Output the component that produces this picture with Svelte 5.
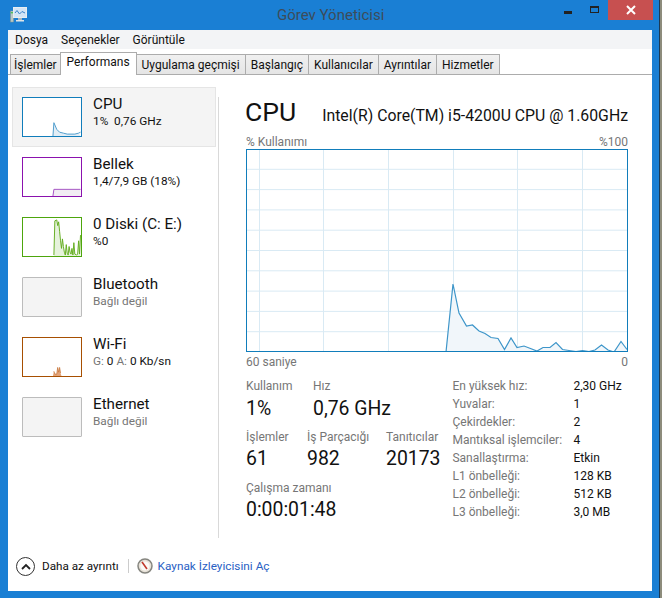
<script lang="ts">
  const tabs = ['İşlemler', 'Performans', 'Uygulama geçmişi', 'Başlangıç', 'Kullanıcılar', 'Ayrıntılar', 'Hizmetler'];

  const specs = [
    ['En yüksek hız:', '2,30 GHz'],
    ['Yuvalar:', '1'],
    ['Çekirdekler:', '2'],
    ['Mantıksal işlemciler:', '4'],
    ['Sanallaştırma:', 'Etkin'],
    ['L1 önbelleği:', '128 KB'],
    ['L2 önbelleği:', '512 KB'],
    ['L3 önbelleği:', '3,0 MB'],
  ];

  // big graph, traced from the reference, in chart coordinates (382 x 203)
  const cpu = [
    [200, 203], [207, 135], [213, 164], [220.5, 177], [226.5, 176], [233, 182], [239, 184.5],
    [245, 188.5], [252, 189.5], [258.5, 200.5], [265, 189], [271, 198.5], [278, 197], [284.5, 199.5],
    [291, 202], [297, 198.5], [304, 198.5], [310, 193.5], [316.5, 200.5], [323, 201.5], [330, 202.5],
    [336.5, 201.5], [343, 202.5], [349, 201], [355.5, 196], [362, 201], [368, 203], [375, 192.5], [381, 200.5],
  ];
  const cpuLine = cpu.map((p) => p.join(',')).join(' ');
  const cpuArea = `200,203 ${cpuLine} 382,203`;
  const hLines = [1, 2, 3, 4, 5, 6, 7, 8, 9].map((i) => i * 20.3);
  const vLines = [13, 77, 142, 207, 271, 336];

  const diskLine = '32,39 33,3 35,2 36,8 37,4 38,14 39,24 40,32 41,22 42,30 43,36 44,39 45,28 46,37 47,39 48,30 49,36 50,38 51,32 52,39 53,26 54,38 56,39 57,38 58,24 59,38 60,18';
</script>

<div class="window">
  <header class="titlebar">
    <svg class="app-icon" width="17" height="16" viewBox="0 0 17 16">
      <rect x="0.5" y="4" width="3" height="11" fill="#b9c7c4" stroke="#7f9490" stroke-width="0.5" />
      <rect x="0.8" y="5" width="2.4" height="1.4" fill="#4fc05a" />
      <rect x="3.5" y="0.5" width="13" height="10" fill="#d3e5f6" stroke="#e6eef2" />
      <path d="M5 6 L7 3.5 L9.5 7 L12 4.5 L15 6" fill="none" stroke="#3a83c9" stroke-width="1" />
      <rect x="8" y="11" width="4" height="2" fill="#a9b6bf" />
      <rect x="6" y="13" width="8" height="1.5" fill="#dfe5e8" />
    </svg>
    <span class="title">Görev Yöneticisi</span>
    <div class="controls">
      <span class="min"></span>
      <span class="max"></span>
      <span class="close">
        <svg width="10" height="10" viewBox="0 0 10 10">
          <path d="M1 1 L9 9 M9 1 L1 9" stroke="#fff" stroke-width="2" />
        </svg>
      </span>
    </div>
  </header>

  <div class="client">
    <nav class="menu">
      <span>Dosya</span>
      <span>Seçenekler</span>
      <span>Görüntüle</span>
    </nav>

    <div class="tabs">
      {#each tabs as tab}
        <span class="tab" class:active={tab === 'Performans'}>{tab}</span>
      {/each}
    </div>

    <main class="body">
      <aside class="sidebar">
        <div class="item selected">
          <svg class="thumb" viewBox="0 0 60 40" style="border-color: #117dbb">
            <polygon points="31,40 32,26 35,33 38,36 42,37 46,38 50,38 54,38 58,37 60,40" fill="#e2edf5" />
            <polyline points="31,40 32,26 35,33 38,36 42,37 46,38 50,38 54,38 58,37 60,36" fill="none" stroke="#4a9acb" />
          </svg>
          <div class="item-text">
            <div class="name">CPU</div>
            <div class="sub">1%&nbsp; 0,76 GHz</div>
          </div>
        </div>
        <div class="item">
          <svg class="thumb" viewBox="0 0 60 40" style="border-color: #8b12ae">
            <polygon points="31,40 32,33 60,33 60,40" fill="#f1edf3" />
            <polyline points="31,40 32,33 60,33" fill="none" stroke="#a24fc2" />
          </svg>
          <div class="item-text">
            <div class="name">Bellek</div>
            <div class="sub">1,4/7,9 GB (18%)</div>
          </div>
        </div>
        <div class="item">
          <svg class="thumb" viewBox="0 0 60 40" style="border-color: #4da60c">
            <polygon points="{diskLine} 60,40 32,40" fill="#e6f2dc" />
            <polyline points={diskLine} fill="none" stroke="#62ac1e" stroke-width="1" />
          </svg>
          <div class="item-text">
            <div class="name">0 Diski (C: E:)</div>
            <div class="sub">%0</div>
          </div>
        </div>
        <div class="item">
          <div class="thumb empty"></div>
          <div class="item-text">
            <div class="name">Bluetooth</div>
            <div class="sub muted">Bağlı değil</div>
          </div>
        </div>
        <div class="item">
          <svg class="thumb" viewBox="0 0 60 40" style="border-color: #a74f01">
            <polygon points="31,40 32,35 33,38 35,38 36,31 37,36 38,31 39,37 40,40" fill="#e2a47a" />
            <polyline points="32,35 33,38 35,38 36,31 37,36 38,31 39,37" fill="none" stroke="#c8763a" stroke-width="0.8" />
          </svg>
          <div class="item-text">
            <div class="name">Wi-Fi</div>
            <div class="sub"><span class="muted">G:</span> 0 <span class="muted">A:</span> 0 Kb/sn</div>
          </div>
        </div>
        <div class="item">
          <div class="thumb empty"></div>
          <div class="item-text">
            <div class="name">Ethernet</div>
            <div class="sub muted">Bağlı değil</div>
          </div>
        </div>
      </aside>

      <section class="detail">
        <div class="heading">
          <h1>CPU</h1>
          <span class="model">Intel(R) Core(TM) i5-4200U CPU @ 1.60GHz</span>
        </div>
        <div class="axis top"><span>% Kullanımı</span><span>%100</span></div>
        <svg class="chart" viewBox="0 0 382 203">
          {#each hLines as y}
            <line x1="0" x2="382" y1={y} y2={y} stroke="#d9eaf4" />
          {/each}
          {#each vLines as x}
            <line x1={x + 0.5} x2={x + 0.5} y1="0" y2="203" stroke="#d9eaf4" />
          {/each}
          <polygon points={cpuArea} fill="#f1f6fa" />
          <polyline points={cpuLine} fill="none" stroke="#3d95c9" stroke-width="1.2" />
        </svg>
        <div class="axis bottom"><span>60 saniye</span><span>0</span></div>

        <div class="stats">
          <div class="live">
            <div class="row first">
              <div class="stat usage"><label>Kullanım</label><strong>1%</strong></div>
              <div class="stat"><label>Hız</label><strong>0,76 GHz</strong></div>
            </div>
            <div class="row">
              <div class="stat procs"><label>İşlemler</label><strong>61</strong></div>
              <div class="stat threads"><label>İş Parçacığı</label><strong>982</strong></div>
              <div class="stat"><label>Tanıtıcılar</label><strong>20173</strong></div>
            </div>
            <div class="stat"><label>Çalışma zamanı</label><strong>0:00:01:48</strong></div>
          </div>
          <dl class="specs">
            {#each specs as [k, v]}
              <dt>{k}</dt>
              <dd>{v}</dd>
            {/each}
          </dl>
        </div>
      </section>
    </main>

    <footer class="footer">
      <span class="less-icon">
        <svg width="10" height="7" viewBox="0 0 10 7">
          <path d="M1 6 L5 2 L9 6" fill="none" stroke="#222" stroke-width="1.8" />
        </svg>
      </span>
      <span class="less">Daha az ayrıntı</span>
      <span class="sep"></span>
      <svg class="gauge" width="16" height="16" viewBox="0 0 16 16">
        <circle cx="8" cy="8" r="7" fill="#e8e2d8" stroke="#85857f" stroke-width="1.5" />
        <circle cx="8" cy="8" r="4.6" fill="#fbfaf6" />
        <path d="M5 4 L10 11" stroke="#c0392b" stroke-width="1.6" />
      </svg>
      <span class="link">Kaynak İzleyicisini Aç</span>
    </footer>
  </div>
</div>

<style>
  :global(body) {
    margin: 0;
    background: #8d8c7c;
  }

  .window {
    width: 660px;
    height: 598px;
    box-sizing: border-box;
    padding: 0 7px 7px 8px;
    background: #1a7fd4;
    border-right: 1px solid #1c3a55;
    font-family: Roboto, 'Noto Sans', sans-serif;
    font-size: 12px;
    color: #111;
    display: flex;
    flex-direction: column;
    overflow: hidden;
  }

  .titlebar {
    height: 30px;
    flex: none;
    display: flex;
    align-items: center;
    position: relative;
    margin-right: -7px;
  }

  .app-icon {
    margin: 0 0 0 2px;
  }

  .title {
    position: absolute;
    left: 269px;
    top: 6px;
    font-size: 15px;
    color: #3d4c5a;
  }

  .controls {
    position: absolute;
    right: 0;
    top: 0;
    display: flex;
    align-items: flex-start;
  }

  .min {
    width: 8px;
    height: 3px;
    background: #222;
    margin: 11px 18px 0 0;
  }

  .max {
    width: 7px;
    height: 4px;
    border: 1px solid #222;
    border-top-width: 2px;
    margin: 6px 9px 0 0;
  }

  .close {
    width: 45px;
    height: 20px;
    margin-right: 6px;
    background: #c75050;
    display: flex;
    align-items: center;
    justify-content: center;
  }

  .client {
    flex: 1;
    min-height: 0;
    background: #fff;
    display: flex;
    flex-direction: column;
  }

  .menu {
    height: 19px;
    flex: none;
    background: #f3f4f6;
    display: flex;
    align-items: center;
    gap: 13px;
    padding-left: 7px;
  }

  .tabs {
    height: 25px;
    flex: none;
    margin-top: 1px;
    display: flex;
    align-items: flex-end;
    border-bottom: 1px solid #acacac;
    box-sizing: border-box;
    padding-left: 2px;
  }

  .tab {
    height: 20px;
    box-sizing: border-box;
    border: 1px solid #acacac;
    border-bottom: none;
    margin-right: -1px;
    padding: 0 5px;
    background: linear-gradient(#f0f0f0, #e5e5e5);
    display: flex;
    align-items: center;
  }

  .tab:first-child {
    padding: 0 3px;
  }

  .tab.active {
    height: 23px;
    background: #fff;
    margin-bottom: -1px;
    padding: 0 6px 4px;
    z-index: 1;
  }

  .body {
    flex: 1;
    min-height: 0;
    display: flex;
  }

  .sidebar {
    width: 211px;
    flex: none;
    box-sizing: border-box;
    padding: 12px 0 0 4px;
    display: flex;
    flex-direction: column;
    position: relative;
  }

  .sidebar::after {
    content: '';
    position: absolute;
    right: 0;
    top: 22px;
    bottom: 5px;
    width: 1px;
    background: #d9d9d9;
  }

  .item {
    width: 204px;
    height: 60px;
    box-sizing: border-box;
    display: flex;
    border: 1px solid transparent;
    padding: 9px 0 0 9px;
  }

  .item.selected {
    background: #f4f4f4;
    border-color: #e5e5e5;
  }

  .thumb {
    width: 60px;
    height: 40px;
    box-sizing: border-box;
    border: 1px solid #bcbcbc;
    background: #fff;
    flex: none;
    display: block;
  }

  .thumb.empty {
    background: #f4f4f4;
    border-radius: 1px;
  }

  .item-text {
    margin-left: 11px;
    margin-top: -3px;
  }

  .name {
    font-size: 15.2px;
    line-height: 20px;
  }

  .sub {
    font-size: 11.8px;
    line-height: 16px;
    margin-top: -1px;
  }

  .muted {
    color: #767676;
  }

  .detail {
    flex: 1;
    min-width: 0;
    box-sizing: border-box;
    padding: 20px 24px 0 26px;
  }

  .heading {
    display: flex;
    justify-content: space-between;
    align-items: baseline;
    height: 40px;
  }

  h1 {
    margin: 0;
    font-size: 26.5px;
    font-weight: 400;
    line-height: 34px;
  }

  .model {
    font-size: 15.8px;
  }

  .axis {
    display: flex;
    justify-content: space-between;
    font-size: 12px;
    line-height: 14px;
    color: #767676;
    margin-left: 1px;
  }

  .chart {
    display: block;
    width: 382px;
    height: 203px;
    margin-left: 1px;
    box-sizing: content-box;
    outline: 1.5px solid #117dbb;
    outline-offset: -1px;
    background: #fff;
  }

  .axis.bottom {
    margin-top: 3px;
  }

  .stats {
    display: flex;
    justify-content: space-between;
    margin-top: 10px;
    margin-left: 1px;
  }

  .live {
    width: 207px;
  }

  .row {
    display: flex;
    margin-bottom: 7px;
  }

  .row.first {
    margin-bottom: 6px;
  }

  .row.first strong {
    margin-top: 1px;
  }

  .usage {
    width: 67px;
  }

  .procs {
    width: 61px;
  }

  .threads {
    width: 79px;
  }

  label {
    display: block;
    font-size: 12px;
    line-height: 14px;
    color: #767676;
  }

  strong {
    display: block;
    font-weight: 400;
    font-size: 19.4px;
    line-height: 30px;
    white-space: nowrap;
  }

  .specs {
    margin: -2px 1px 0 0;
    width: 175px;
    display: grid;
    grid-template-columns: 121px 1fr;
    grid-auto-rows: 18px;
    font-size: 12px;
    align-items: center;
    align-self: flex-start;
  }

  dt {
    color: #767676;
    white-space: nowrap;
  }

  dd {
    margin: 0;
    white-space: nowrap;
  }

  .footer {
    height: 48px;
    flex: none;
    box-sizing: border-box;
    display: flex;
    align-items: center;
    padding: 0 0 2px 8px;
  }

  .less-icon {
    width: 19px;
    height: 19px;
    border: 1.5px solid #333;
    border-radius: 50%;
    display: flex;
    align-items: center;
    justify-content: center;
    box-sizing: border-box;
  }

  .less {
    margin-left: 7px;
    font-size: 11.7px;
  }

  .sep {
    width: 1px;
    height: 14px;
    background: #ccc;
    margin: 0 8px 0 9px;
  }

  .link {
    margin-left: 5px;
    color: #2a5fc4;
    font-size: 11.8px;
  }
</style>
